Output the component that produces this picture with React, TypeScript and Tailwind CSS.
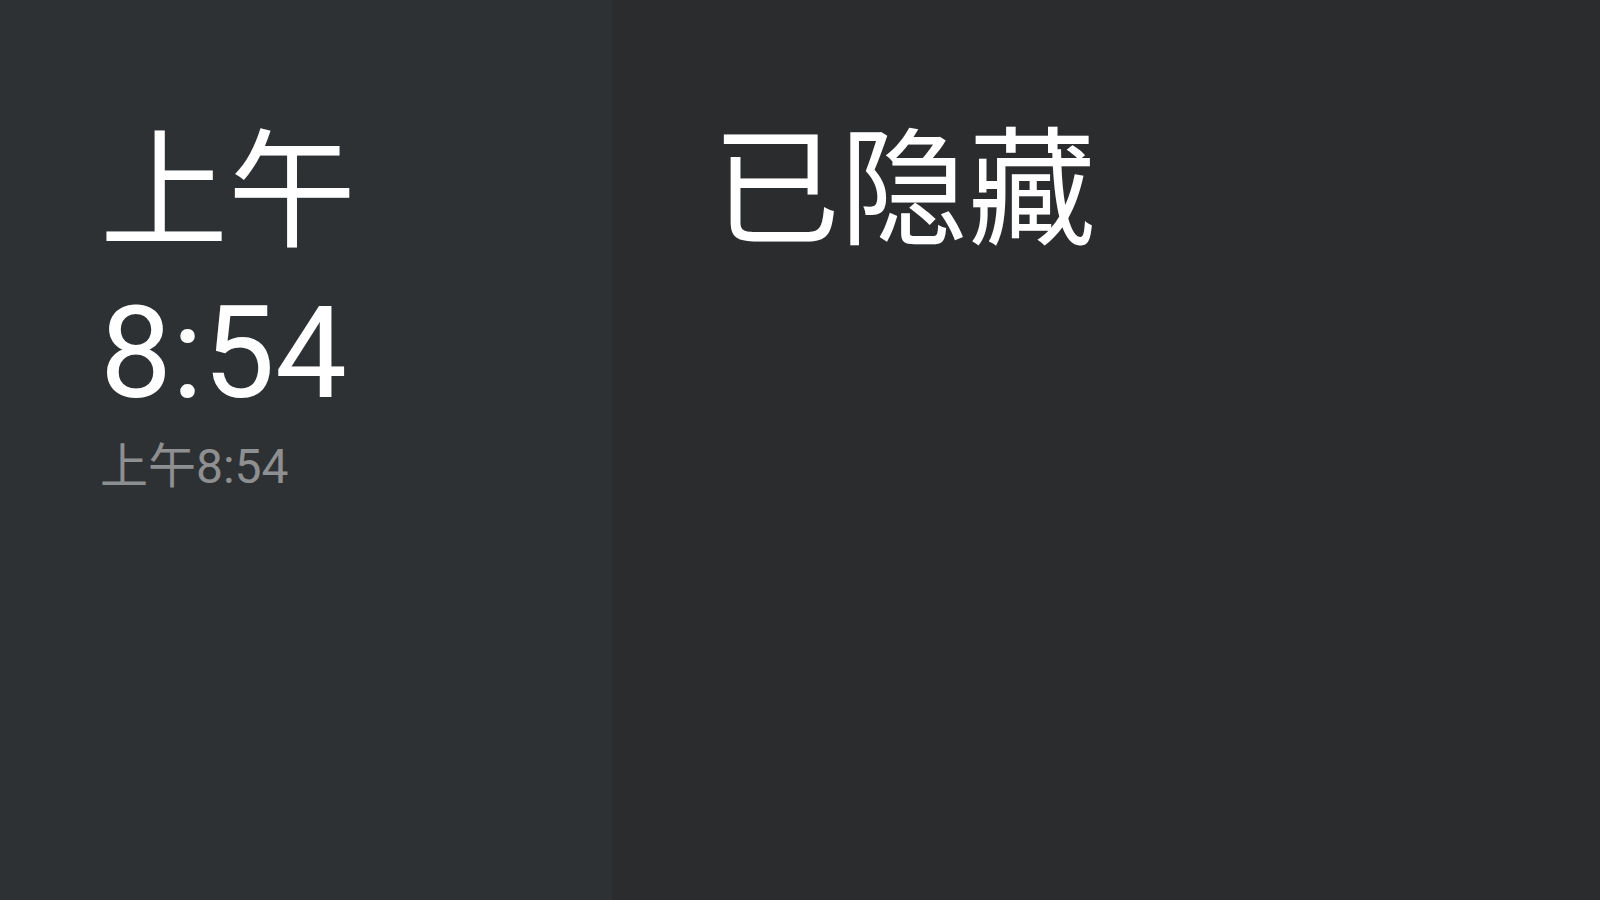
export default function App() {
  return (
    <div className="flex h-screen w-full overflow-hidden font-['Roboto','Noto_Sans_CJK_SC',sans-serif]">
      {/* Clock panel */}
      <section className="w-[612px] shrink-0 bg-[#2e3134] pl-[100px] pt-[113px]">
        <div className="text-[128px] leading-[160px] text-white">
          <div>上午</div>
          <div>8:54</div>
        </div>
        <div className="mt-[4px] text-[48px] leading-[60px] text-[#8e8f91]">上午8:54</div>
      </section>

      {/* Hidden state panel */}
      <section className="flex-1 bg-[#2b2c2e] pl-[100px] pt-[111px]">
        <div className="text-[128px] leading-[160px] text-white">已隐藏</div>
      </section>
    </div>
  );
}
